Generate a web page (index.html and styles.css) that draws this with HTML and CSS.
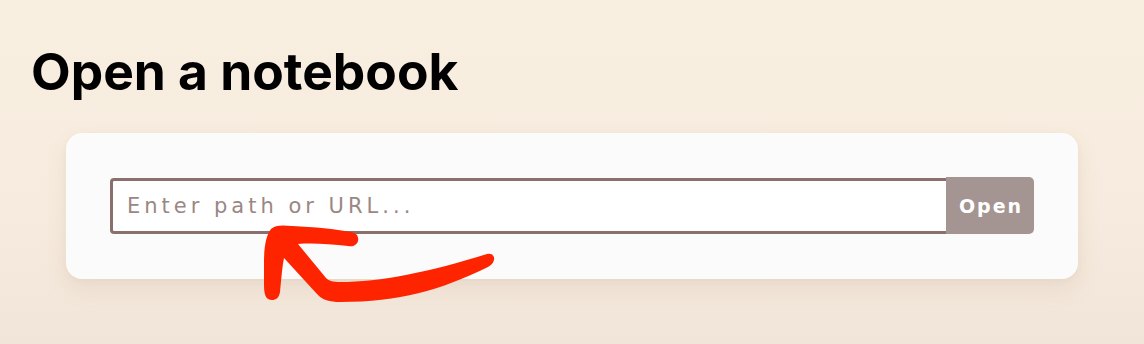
FILE: index.html
```html
<!DOCTYPE html>
<html lang="en">
<head>
<meta charset="utf-8">
<title>Open a notebook</title>
<link rel="stylesheet" href="styles.css">
</head>
<body>
<main class="page">
  <h1 class="title">Open a notebook</h1>
  <section class="card">
    <form class="open-form">
      <input class="path-input" type="text" placeholder="Enter path or URL...">
      <button class="open-btn" type="button">Open</button>
    </form>
  </section>
  <svg class="annotation" viewBox="250 215 260 100" width="260" height="100" aria-hidden="true">
    <path fill="#fe2400" d="M 272 300 C 266 300, 264 295, 264 285 L 264 262 C 264 248, 266 235, 271 229 C 275 225, 282 225, 292 226 C 315 227, 335 229, 351 232 C 357 233, 359 237, 358 241 C 357 245, 353 247, 348 246 C 330 244, 312 243, 298 244 L 326 278 C 329 281, 333 282, 340 282 C 380 282, 430 272, 487 254 C 492 253, 495 256, 494 260 C 493 264, 490 266, 486 268 C 440 290, 400 302, 340 302 C 330 302, 322 300, 317 294 L 284 258 C 282 268, 281 283, 280 292 C 279 298, 276 300, 272 300 Z"/>
  </svg>
</main>
</body>
</html>
```
FILE: styles.css
```css
html, body {
  margin: 0;
  padding: 0;
  height: 100%;
}
body {
  background: linear-gradient(180deg, #f9efe1 0%, #f6ebde 60%, #f1e5d9 100%);
  font-family: "DejaVu Sans", sans-serif;
}
.page {
  position: relative;
  padding: 42px 66px 0 66px;
  min-height: 100%;
  box-sizing: border-box;
}
.title {
  font-family: Inter, "Liberation Sans", sans-serif;
  font-weight: 700;
  font-size: 51.5px;
  line-height: 58px;
  color: #000;
  margin: 0 0 33px -35px;
  letter-spacing: 0;
}
.card {
  background: #fbfbfb;
  border-radius: 16px;
  padding: 45px 44px;
  box-shadow: 0 10px 22px rgba(160, 120, 80, 0.10), 0 2px 6px rgba(160, 120, 80, 0.06);
}
.open-form {
  display: flex;
  margin: 0;
}
.path-input {
  flex: 1;
  min-width: 0;
  height: 56px;
  box-sizing: border-box;
  border: 3px solid #8a706d;
  border-right: none;
  border-radius: 4px 0 0 4px;
  background: #fff;
  padding: 0 14px;
  font-family: "DejaVu Sans", sans-serif;
  font-size: 21px;
  letter-spacing: 4px;
  color: #5a4543;
  outline: none;
}
.path-input::placeholder {
  color: #9a8784;
  opacity: 1;
}
.open-btn {
  width: 88px;
  height: 57px;
  margin-top: -1px;
  border: none;
  border-radius: 0 5px 5px 0;
  background: #a59592;
  color: #fff;
  font-family: "DejaVu Sans", sans-serif;
  font-weight: 700;
  font-size: 19px;
  letter-spacing: 2px;
  padding: 0 0 0 2px;
  cursor: pointer;
}
.annotation {
  position: absolute;
  left: 250px;
  top: 215px;
}
```
